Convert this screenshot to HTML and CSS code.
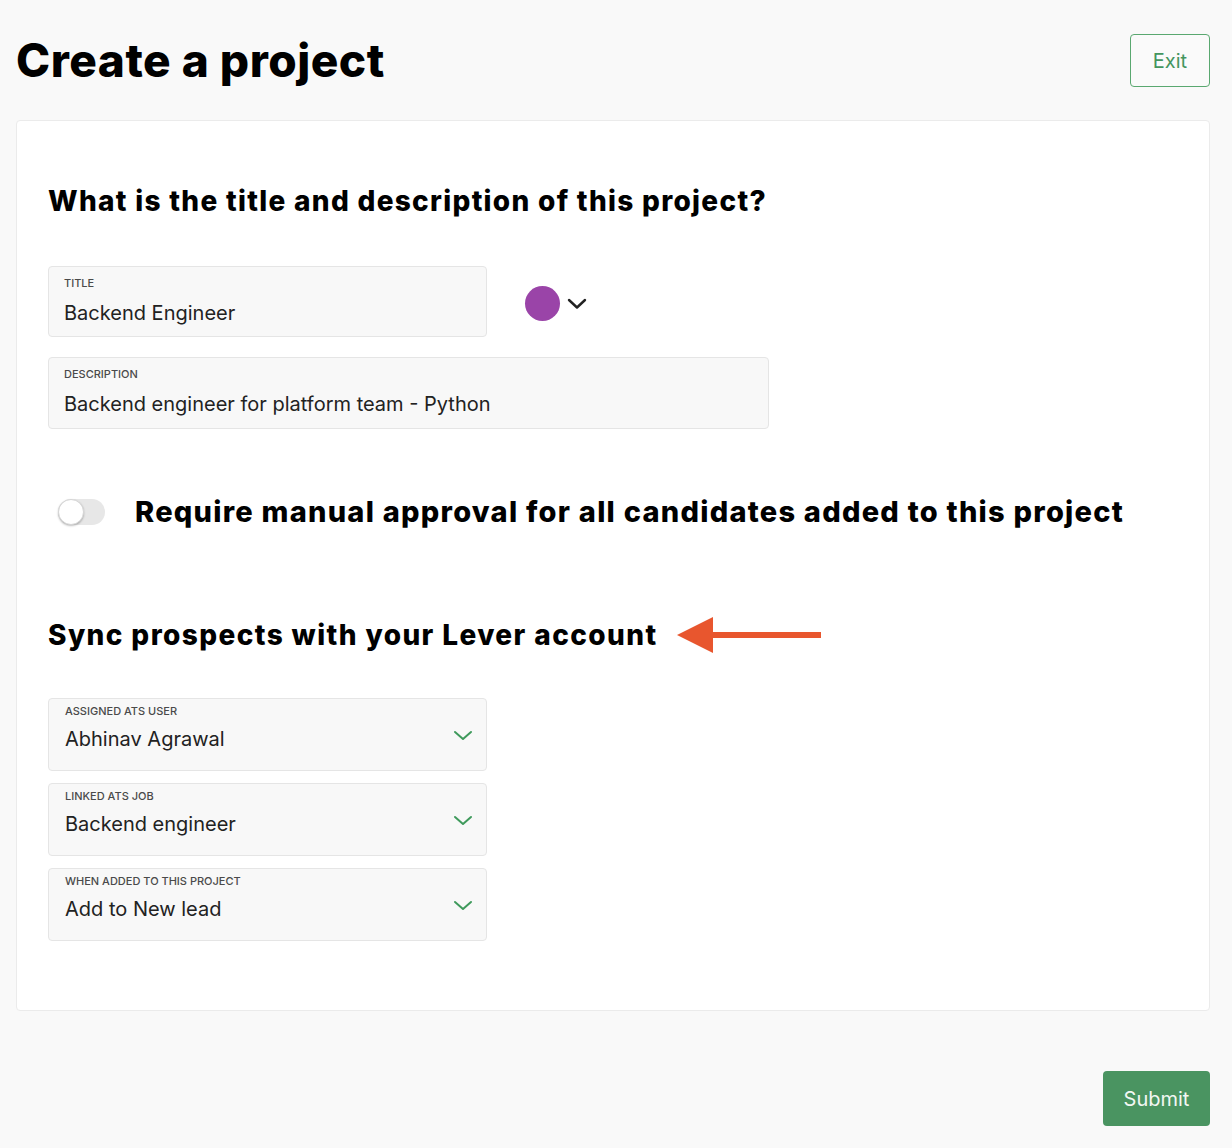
FILE: index.html
```html
<!DOCTYPE html>
<html lang="en">
<head>
<meta charset="utf-8">
<title>Create a project</title>
<link rel="stylesheet" href="styles.css">
</head>
<body>
<div class="page">
  <header class="header">
    <h1 class="page-title">Create a project</h1>
    <button class="btn-exit" type="button">Exit</button>
  </header>

  <main class="card">
    <h2 class="section-title">What is the title and description of this project?</h2>

    <div class="title-row">
      <div class="field field-title">
        <div class="field-label">TITLE</div>
        <div class="field-value">Backend Engineer</div>
      </div>
      <div class="color-picker">
        <span class="color-dot"></span>
        <svg class="color-chevron" width="20" height="12" viewBox="0 0 20 12" aria-hidden="true">
          <path d="M2 2 L10 9.5 L18 2" fill="none" stroke="#222" stroke-width="2.4" stroke-linecap="round" stroke-linejoin="round"/>
        </svg>
      </div>
    </div>

    <div class="field field-desc">
      <div class="field-label">DESCRIPTION</div>
      <div class="field-value">Backend engineer for platform team - Python</div>
    </div>

    <div class="toggle-row">
      <span class="toggle"><span class="toggle-knob"></span></span>
      <span class="toggle-text">Require manual approval for all candidates added to this project</span>
    </div>

    <div class="sync-row">
      <h2 class="section-title sync-title">Sync prospects with your Lever account</h2>
      <svg class="arrow" width="146" height="38" viewBox="0 0 146 38" aria-hidden="true">
        <polygon points="0,19 36,1 36,37" fill="#e8562e"/>
        <rect x="34" y="16" width="110" height="6" fill="#e8562e"/>
      </svg>
    </div>

    <div class="selects">
      <div class="field field-select">
        <div class="field-label">ASSIGNED ATS USER</div>
        <div class="field-value">Abhinav Agrawal</div>
        <svg class="select-chevron" width="20" height="12" viewBox="0 0 20 12" aria-hidden="true">
          <path d="M2 2 L10 9 L18 2" fill="none" stroke="#3f9a5c" stroke-width="2" stroke-linecap="round" stroke-linejoin="round"/>
        </svg>
      </div>
      <div class="field field-select">
        <div class="field-label">LINKED ATS JOB</div>
        <div class="field-value">Backend engineer</div>
        <svg class="select-chevron" width="20" height="12" viewBox="0 0 20 12" aria-hidden="true">
          <path d="M2 2 L10 9 L18 2" fill="none" stroke="#3f9a5c" stroke-width="2" stroke-linecap="round" stroke-linejoin="round"/>
        </svg>
      </div>
      <div class="field field-select">
        <div class="field-label">WHEN ADDED TO THIS PROJECT</div>
        <div class="field-value">Add to New lead</div>
        <svg class="select-chevron" width="20" height="12" viewBox="0 0 20 12" aria-hidden="true">
          <path d="M2 2 L10 9 L18 2" fill="none" stroke="#3f9a5c" stroke-width="2" stroke-linecap="round" stroke-linejoin="round"/>
        </svg>
      </div>
    </div>
  </main>

  <div class="footer">
    <button class="btn-submit" type="button">Submit</button>
  </div>
</div>
</body>
</html>
```

FILE: styles.css
```css
* { box-sizing: border-box; }

html, body {
  margin: 0;
  padding: 0;
  background: #f9f9f9;
}

body {
  font-family: "Inter", "Liberation Sans", sans-serif;
  color: #222;
}

.page {
  padding: 34px 22px 0 16px;
}

.header {
  display: flex;
  align-items: center;
  justify-content: space-between;
  height: 53px;
}

.page-title {
  margin: 0;
  font-size: 46px;
  line-height: 53px;
  font-weight: 800;
  color: #000;
  letter-spacing: 0.5px;
}

.btn-exit {
  width: 80px;
  height: 53px;
  border: 1.5px solid #5aa870;
  border-radius: 4px;
  background: #fafafa;
  color: #44955e;
  font-family: "Inter", "Liberation Sans", sans-serif;
  font-size: 20px;
  padding: 0;
}

.card {
  margin-top: 33px;
  background: #fff;
  border: 1px solid #ebebeb;
  border-radius: 4px;
  padding: 63px 31px 69px;
}

.section-title {
  margin: 0;
  font-size: 28px;
  line-height: 34px;
  font-weight: 800;
  color: #000;
  letter-spacing: 1.3px;
}

.title-row {
  margin-top: 48px;
  display: flex;
  align-items: center;
}

.field {
  background: #f8f8f8;
  border: 1px solid #e5e5e5;
  border-radius: 4px;
  padding: 9px 15px 12px;
}

.field-title {
  width: 439px;
  height: 71px;
}

.field-desc {
  margin-top: 20px;
  width: 721px;
  height: 72px;
}

.field-label {
  font-size: 11px;
  line-height: 14px;
  color: #4a4a4a;
  font-weight: 500;
}

.field-value {
  margin-top: 11px;
  font-size: 20px;
  line-height: 24px;
  color: #222;
}

.color-picker {
  margin-left: 38px;
  display: flex;
  align-items: center;
  gap: 7px;
  padding-top: 4px;
}

.color-dot {
  width: 35px;
  height: 35px;
  border-radius: 50%;
  background: #9a44a8;
}

.color-chevron {
  display: block;
}

.toggle-row {
  margin-top: 65px;
  display: flex;
  align-items: center;
  height: 36px;
  padding-left: 10px;
}

.toggle {
  position: relative;
  width: 47px;
  height: 26px;
  border-radius: 13px;
  background: #e7e7e7;
  flex: none;
}

.toggle-knob {
  position: absolute;
  left: 0;
  top: 0;
  width: 26px;
  height: 26px;
  border-radius: 50%;
  background: #fff;
  border: 1px solid #d6d6d6;
  box-shadow: 0 1px 2px rgba(0, 0, 0, 0.25);
}

.toggle-text {
  margin-left: 30px;
  font-size: 29px;
  line-height: 36px;
  font-weight: 800;
  color: #000;
  letter-spacing: 1.25px;
}

.sync-row {
  margin-top: 86px;
  display: flex;
  align-items: center;
}

.sync-title {
  letter-spacing: 1.4px;
}

.arrow {
  margin-left: 20px;
  display: block;
}

.selects {
  margin-top: 44px;
  display: flex;
  flex-direction: column;
  gap: 12px;
}

.field-select {
  position: relative;
  width: 439px;
  height: 73px;
  padding: 5px 16px 0 16px;
}

.field-select .field-value {
  margin-top: 9px;
  font-size: 20px;
}

.select-chevron {
  position: absolute;
  right: 13px;
  top: 31px;
}

.footer {
  display: flex;
  justify-content: flex-end;
  margin-top: 60px;
}

.btn-submit {
  width: 107px;
  height: 55px;
  border: none;
  border-radius: 4px;
  background: #4a9461;
  color: #f2f7f3;
  font-family: "Inter", "Liberation Sans", sans-serif;
  font-size: 20px;
  padding: 0;
}
```
